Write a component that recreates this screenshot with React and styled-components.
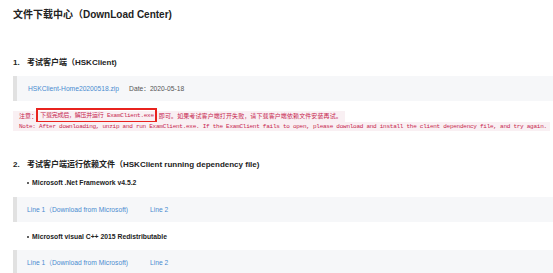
import React from "react";
import styled, { createGlobalStyle } from "styled-components";

const Global = createGlobalStyle`
  html, body { margin: 0; padding: 0; background: #fff; }
  body { font-family: "Liberation Sans", "Noto Sans CJK SC", sans-serif; color: #333; overflow: hidden; }
`;

const Page = styled.div`
  display: flex;
  flex-direction: column;
  padding: 8px 0 0 13px;
  width: 553px;
  box-sizing: border-box;
`;

const Title = styled.h1`
  margin: 0;
  font-size: 10px;
  line-height: 14px;
  font-weight: bold;
  color: #222;
`;

const SectionHead = styled.h2`
  display: flex;
  margin: ${(p) => p.$mt}px 0 0 0;
  font-size: 8px;
  line-height: 12px;
  font-weight: bold;
  color: #222;
`;

const Num = styled.span`
  width: 14px;
  flex: none;
`;

const InfoBox = styled.div`
  display: flex;
  align-items: center;
  gap: ${(p) => p.$gap}px;
  margin-top: ${(p) => p.$mt}px;
  height: 25px;
  box-sizing: border-box;
  background: #f6f7f9;
  border-left: 4px solid #e1e1e1;
  padding-left: ${(p) => p.$pl}px;
  font-size: 6.7px;
  line-height: 10px;
`;

const Link = styled.a`
  color: #4a8bd0;
  text-decoration: none;
`;

const Muted = styled.span`
  color: #555;
`;

const Notes = styled.div`
  display: flex;
  flex-direction: column;
  align-items: flex-start;
  margin-top: 10px;
  font-family: "Liberation Mono", "Noto Sans CJK SC", monospace;
  font-size: 6px;
  color: #c7254e;
`;

const NoteLine = styled.div`
  background: #f9f0f3;
  padding: 0 3px 0 6px;
  height: ${(p) => p.$h}px;
  line-height: ${(p) => p.$h}px;
  letter-spacing: ${(p) => p.$ls}px;
  white-space: nowrap;
`;

const Marked = styled.span`
  display: inline-block;
  vertical-align: top;
  height: 11px;
  line-height: 11px;
  letter-spacing: -0.25px;
  border: 2px solid #e8231e;
  padding: 0 1px 0 2px;
  margin: -3px 2px -1px -1px;
`;

const Bullet = styled.div`
  display: flex;
  align-items: center;
  margin: ${(p) => p.$mt}px 0 0 14px;
  font-size: 6.8px;
  line-height: 10px;
  font-weight: bold;
  color: #222;
  &::before {
    content: "";
    width: 1.6px;
    height: 1.6px;
    border-radius: 50%;
    background: #444;
    margin-right: 3.5px;
  }
`;

export default function App() {
  return (
    <>
      <Global />
      <Page>
        <Title>文件下载中心（DownLoad Center)</Title>

        <SectionHead $mt={35}>
          <Num>1.</Num>
          <span>考试客户端（HSKClient)</span>
        </SectionHead>
        <InfoBox $mt={7} $pl={11} $gap={10}>
          <Link href="#">HSKClient-Home20200518.zip</Link>
          <Muted>Date：2020-05-18</Muted>
        </InfoBox>

        <Notes>
          <NoteLine $h={11} $ls={0.1}>
            注意：<Marked>下载完成后，解压并运行 ExamClient.exe</Marked>即可。如果考试客户端打开失败，请下载客户端依赖文件安装再试。
          </NoteLine>
          <NoteLine $h={9} $ls={-0.26}>
            Note: After downloading, unzip and run ExamClient.exe. If the ExamClient fails to open, please download and install the client dependency file, and try again.
          </NoteLine>
        </Notes>

        <SectionHead $mt={28}>
          <Num>2.</Num>
          <span>考试客户端运行依赖文件（HSKClient running dependency file)</span>
        </SectionHead>

        <Bullet $mt={7}>Microsoft .Net Framework v4.5.2</Bullet>
        <InfoBox $mt={9} $pl={10} $gap={22}>
          <Link href="#">Line 1（Download from Microsoft)</Link>
          <Link href="#">Line 2</Link>
        </InfoBox>

        <Bullet $mt={10}>Microsoft visual C++ 2015 Redistributable</Bullet>
        <InfoBox $mt={8} $pl={10} $gap={22}>
          <Link href="#">Line 1（Download from Microsoft)</Link>
          <Link href="#">Line 2</Link>
        </InfoBox>
      </Page>
    </>
  );
}
